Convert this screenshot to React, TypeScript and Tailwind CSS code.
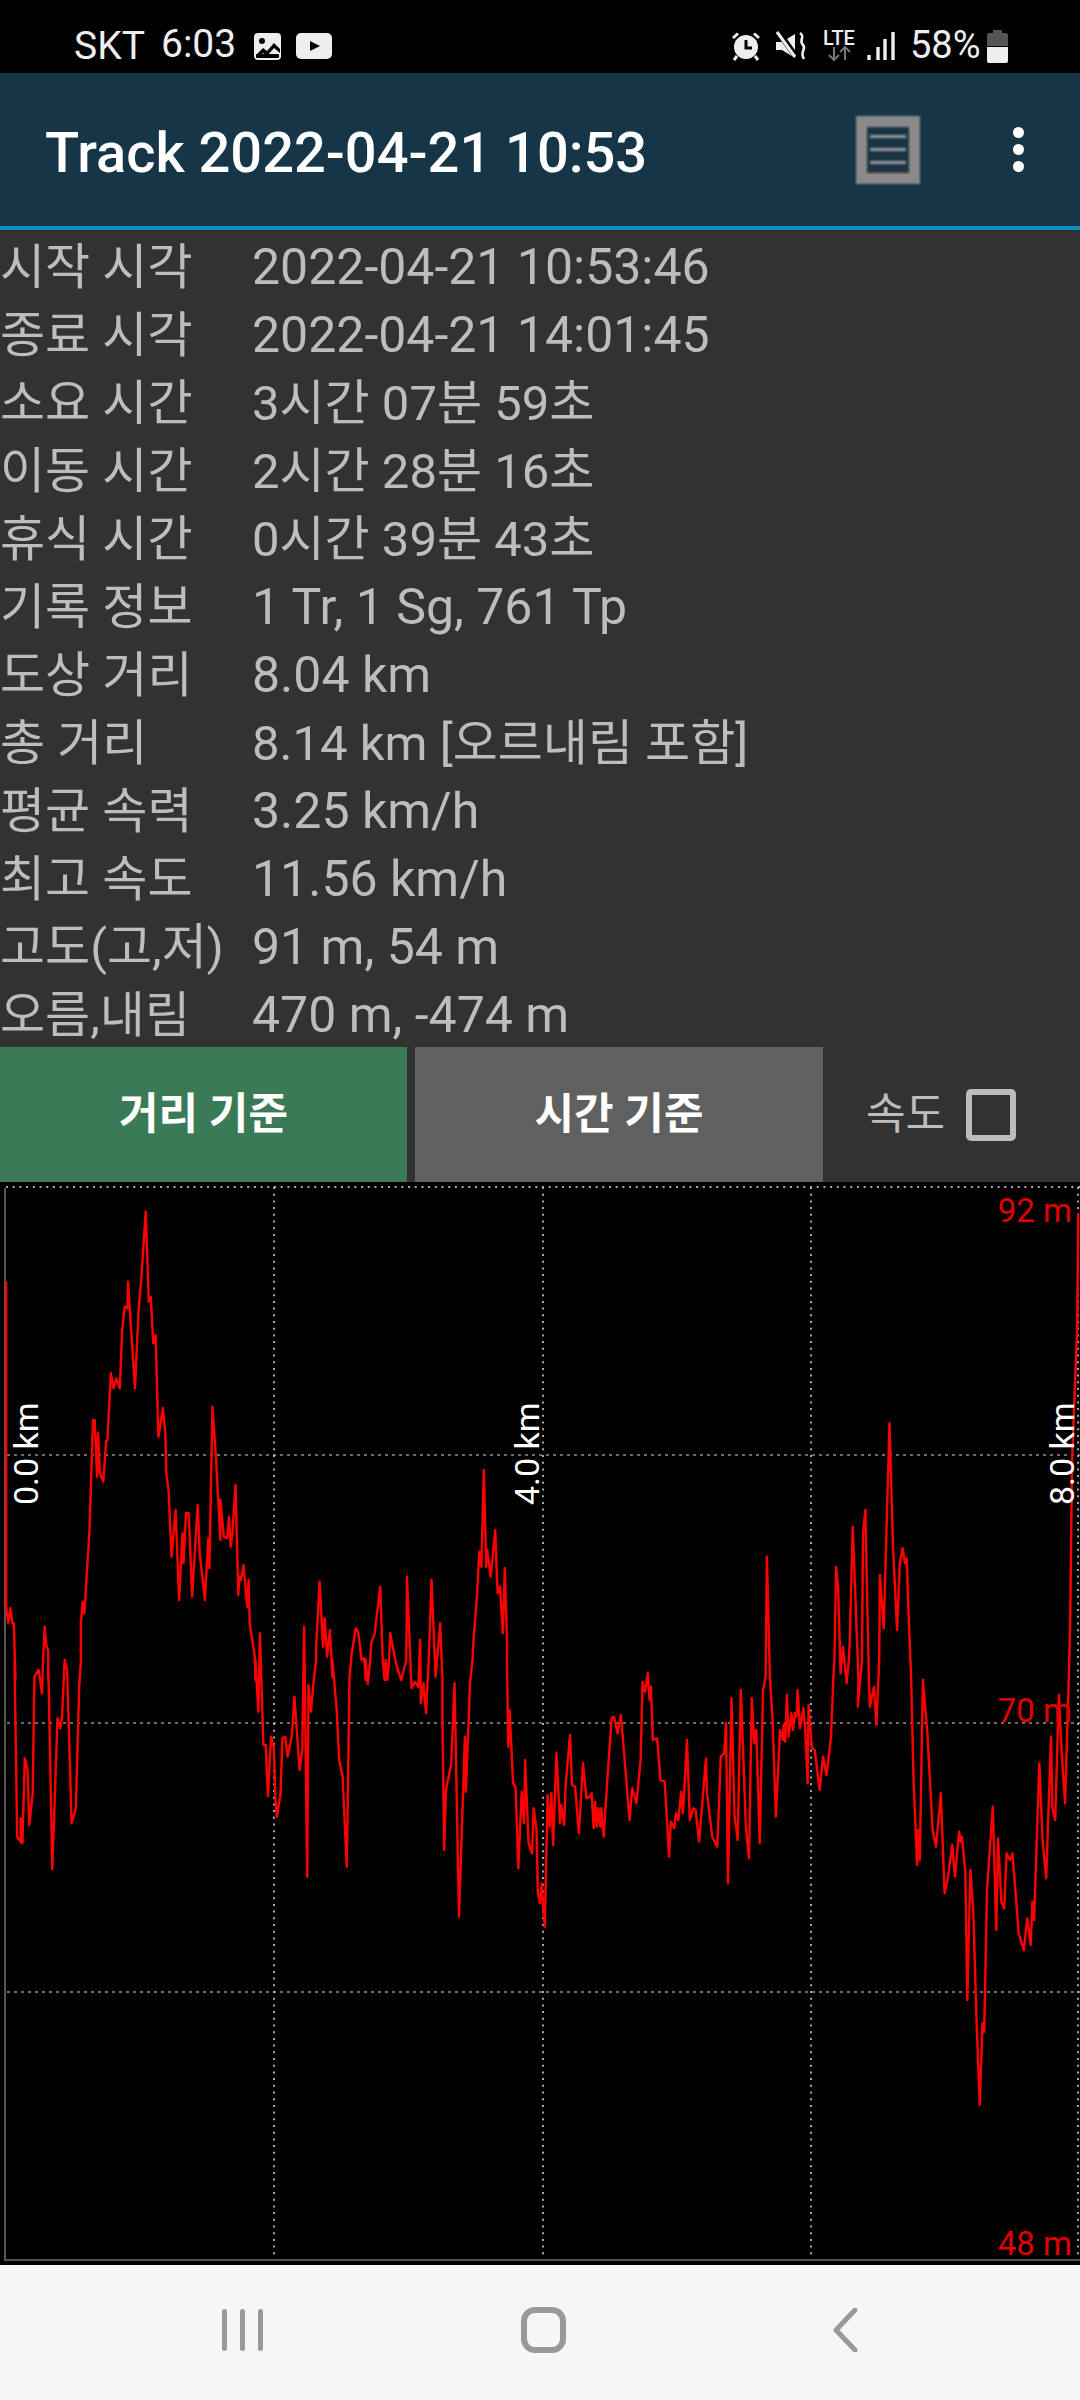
const rows = [
  { label: '시작 시각', value: '2022-04-21 10:53:46', size: 'text-[50px]' },
  { label: '종료 시각', value: '2022-04-21 14:01:45', size: 'text-[50px]' },
  { label: '소요 시간', value: '3시간 07분 59초', size: 'text-[49px]' },
  { label: '이동 시간', value: '2시간 28분 16초', size: 'text-[49px]' },
  { label: '휴식 시간', value: '0시간 39분 43초', size: 'text-[49px]' },
  { label: '기록 정보', value: '1 Tr, 1 Sg, 761 Tp', size: 'text-[50px]' },
  { label: '도상 거리', value: '8.04 km', size: 'text-[50px]' },
  { label: '총 거리', value: '8.14 km [오르내림 포함]', size: 'text-[49px]' },
  { label: '평균 속력', value: '3.25 km/h', size: 'text-[50px]' },
  { label: '최고 속도', value: '11.56 km/h', size: 'text-[50px]' },
  { label: '고도(고,저)', value: '91 m, 54 m', size: 'text-[50px]' },
  { label: '오름,내림', value: '470 m, -474 m', size: 'text-[50px]' },
];

// elevation trace, read off the four quadrants of the chart
const TL = [0, 1180];
const BL = [0, 1660];
const TR = [540, 1180];
const BR = [540, 1660];

const trace: [number[], string][] = [
  [TL, '18,305 18,1280 24,1330 30,1285 36,1330 40,1330 45,1500'],
  [BL, '42,0 50,530 60,545 60,475 65,550 72,295 80,330 85,495 95,400 100,50 112,30 122,100 125,0 130,-100'],
  [TL, '130,1350 135,1400 140,1410 140,1500'],
  [BL, '140,0 152,628 167,175 175,205 180,170 188,0 195,30 208,490 220,445 230,80 235,0'],
  [TL, '235,1330 240,1265 245,1300 250,1215 260,1050 270,720 275,720 282,890 285,760 290,880 300,905 308,785 312,780 322,580 330,625 338,595 348,625 355,450 362,380 370,385 372,305 378,410 392,625 402,400 410,300 423,95 432,365 438,350 445,490 452,465 460,770 473,685 480,760 483,880 490,935 498,1130 510,990 520,1260 530,1060 533,1150 540,1000 548,1000 558,1250 574,975 580,1120 595,1260 605,1075 608,1165 617,680 628,850 640,1080 640,960 650,1070 660,1075 665,1010 670,1100 675,1060 684,915 692,1245 695,1190 700,1200 707,1155 718,1280 722,1200 725,1330 740,1430 742,1500'],
  [BL, '742,0 750,155 755,-80 757,0 765,255 772,255 778,408 787,230 795,260 800,420 804,470 815,400 820,235 828,230 835,290 848,225 855,110 870,330 878,270 883,-100 892,650 896,75 903,155 910,70 918,0'],
  [TL, '918,1400 928,1205 938,1400 943,1315 950,1430 958,1350 965,1490'],
  [BL, '965,0 970,55 978,155 985,300 995,350 1007,620 1015,50 1020,0'],
  [TL, '1020,1430 1033,1345 1040,1355 1050,1440 1058,1435 1062,1500'],
  [BL, '1062,0 1068,72 1075,0'],
  [TL, '1078,1390 1088,1360 1104,1220 1112,1450 1118,1500'],
  [BL, '1115,50 1120,0 1125,60 1130,0'],
  [TL, '1133,1360 1150,1450 1158,1480'],
  [BL, '1150,10 1165,60 1180,0 1182,-250 1195,85 1205,65 1215,80 1220,-60 1222,130 1230,70 1237,160 1245,0'],
  [TL, '1253,1200 1265,1490 1278,1330 1285,1500'],
  [BL, '1285,200 1290,570 1295,390 1310,315 1320,70 1333,770 1350,230 1353,395 1365,70 1372,0'],
  [TL, '1375,1380 1385,1250 1392,1115 1398,1160 1405,870 1412,1160 1415,1110 1425,1190 1438,1050 1445,1240 1452,1220 1460,1360 1466,1165 1473,1400'],
  [BL, '1472,0 1476,260 1480,150 1490,370 1497,380 1505,625 1515,395 1522,490 1525,300 1535,550 1545,580 1550,445 1558,510 1562,700 1568,730'],
  [BR, '5,670 8,730 14,800 22,405 28,500 33,400 38,555 48,280 58,490 62,435 70,495 75,370 87,225 93,375 102,380 113,520 125,310 135,415 145,410 150,400 156,505 160,425 165,500 170,445 175,500 178,445 185,530 195,370 208,175 215,170 225,220 235,165 245,290 260,480 268,385 280,430 292,300 298,65 305,95 313,40 318,120 322,80 328,240 340,235 350,360 362,365 375,590 380,485 390,505 395,460 402,480 410,395 415,460 427,240 435,480 445,445 452,450 462,545 482,295 485,400 500,530 515,560 525,290 535,280 540,190 546,670 556,115 565,470 574,540 583,90 598,500 607,595 615,115 622,250 628,210 638,550 648,90 655,50'],
  [TR, '659,1130 668,1500'],
  [BR, '675,170 685,470 697,210 705,240 707,195 712,245 717,105 722,230 730,160 735,210 740,160 745,170 748,90 755,205 765,145 770,210 777,370 780,135 790,265 798,270 812,390 822,290 832,345 845,230 852,50 855,0'],
  [TR, '860,1160 866,1230 873,1480 880,1400 890,1500'],
  [BR, '890,70 897,0'],
  [TR, '900,1370 908,1040 925,1500'],
  [BR, '923,140 935,0'],
  [TR, '938,1060 945,990 955,1500'],
  [BR, '958,140 970,80 977,195 985,0'],
  [TR, '987,1185 998,1345 1015,730 1025,1100 1037,1350 1045,1150 1053,1105 1060,1150 1065,1135 1070,1300 1078,1500'],
  [BR, '1085,365 1095,615 1098,510 1103,600 1112,60 1125,220 1140,510 1150,560 1164,400 1175,700 1185,650 1197,555 1205,650 1217,515 1222,545 1225,530 1235,635 1241,1020 1250,630 1258,750 1268,1085 1277,1335 1285,1090 1290,1115 1298,690 1315,440 1325,810 1330,535 1340,725 1348,745 1355,580 1365,600 1372,580 1390,820 1405,870 1415,775 1425,855 1430,725 1435,780 1450,310 1460,550 1470,655 1484,230 1488,445 1496,480 1507,105 1515,280 1525,430 1537,0'],
  [TR, '1540,1300 1545,850 1560,440 1563,100'],
];

const tracePoints = trace
  .flatMap(([[ox, oy], pts]) =>
    pts.split(' ').map((p) => {
      const [x, y] = p.split(',').map(Number);
      return `${(ox + x / 2.904).toFixed(1)},${(oy + y / 3 - 1182).toFixed(1)}`;
    }),
  )
  .join(' ');

function StatusBar() {
  return (
    <div className="h-[73px] bg-black flex items-center pt-[19px] text-[#eeeeee] text-[39px] font-[Roboto,sans-serif]">
      <span className="ml-[74px] w-[87px] leading-none">SKT</span>
      <span className="w-[92px] leading-none mt-[-3px]">6:03</span>
      <svg width="29" height="29" viewBox="0 0 29 29">
        <rect x="1" y="1" width="27" height="27" rx="4" fill="#eee" />
        <rect x="3" y="22" width="23" height="4" rx="1" fill="#000" />
        <path d="M3 23 L10 16 L14 19 L21 11 L27 17 V21 L21 16 L14 24 L10 21 L6 25Z" fill="#000" />
        <circle cx="9" cy="9" r="3" fill="#000" />
      </svg>
      <svg width="36" height="26" viewBox="0 0 36 26" className="ml-[14px]">
        <rect width="36" height="26" rx="5" fill="#eee" />
        <path d="M14 8 L24 13 L14 18Z" fill="#000" />
      </svg>
      <div className="ml-auto mr-[72px] flex items-center">
        <svg width="30" height="30" viewBox="0 0 30 30">
          <circle cx="15" cy="16" r="12" fill="#eee" />
          <path d="M15 9 V17 H21" stroke="#000" strokeWidth="3" fill="none" />
          <path d="M2 7 L7 2.5 M28 7 L23 2.5 M6 25 L3 29 M24 25 L27 29" stroke="#eee" strokeWidth="3" />
        </svg>
        <svg width="31" height="30" viewBox="0 0 31 30" className="ml-[15px]">
          <path d="M0 11 H6 L19 3 V27 L6 19 H0Z" fill="#eee" />
          <path d="M3 2 L21 27" stroke="#000" strokeWidth="6" />
          <path d="M1 1 L19 26" stroke="#eee" strokeWidth="3" />
          <path d="M24 2 C30 6 22 9 27 14 C31 18 23 21 28 28" stroke="#eee" strokeWidth="2.6" fill="none" />
        </svg>
        <div className="ml-[15px] w-[34px] h-[32px] flex flex-col items-center">
          <span className="text-[20px] leading-[16px] font-medium">LTE</span>
          <svg width="24" height="15" viewBox="0 0 24 15">
            <path d="M7 1 V14 M2 9 L7 14 L12 9" stroke="#777" strokeWidth="2" fill="none" />
            <path d="M18 14 V1 M13 6 L18 1 L23 6" stroke="#777" strokeWidth="2" fill="none" />
          </svg>
        </div>
        <svg width="28" height="30" viewBox="0 0 28 30" className="ml-[11px]">
          <path d="M2 24 V29 M11 16 V29 M18 8 V29 M26 1 V29" stroke="#eee" strokeWidth="3.4" />
        </svg>
        <span className="ml-[15px] w-[77px] text-[38px] leading-none whitespace-nowrap mt-[-3px]">58%</span>
        <svg width="21" height="33" viewBox="0 0 21 33">
          <path d="M6 0 H15 V3 H19 Q21 3 21 5 V16 H0 V5 Q0 3 2 3 H6Z" fill="#555" />
          <path d="M0 17 H21 V31 Q21 33 19 33 H2 Q0 33 0 31Z" fill="#eee" />
        </svg>
      </div>
    </div>
  );
}

function AppBar() {
  return (
    <div className="h-[157px] bg-[#163547] border-b-4 border-[#0f8fbf] flex items-center font-[Roboto,sans-serif]">
      <h1 className="ml-[45px] mt-[7px] text-[56px] font-medium leading-none text-white whitespace-nowrap">
        Track 2022-04-21 10:53
      </h1>
      <div className="ml-auto w-[64px] h-[68px] bg-[#8a8a8a] blur-[1.2px] mr-[93px] px-[11px] pt-[11px]">
        <div className="h-[46px] bg-[#1a3445] border-b-2 border-[#333] flex flex-col gap-[10px] px-[3px] pt-[8px]">
          <div className="h-[3px] bg-[#999]" />
          <div className="h-[3px] bg-[#999]" />
          <div className="h-[3px] bg-[#999]" />
        </div>
      </div>
      <div className="mr-[56px] flex flex-col gap-[6px]">
        <div className="w-[11px] h-[11px] rounded-full bg-white" />
        <div className="w-[11px] h-[11px] rounded-full bg-white" />
        <div className="w-[11px] h-[11px] rounded-full bg-white" />
      </div>
    </div>
  );
}

function Chart() {
  const vx = [274, 543, 811, 1078];
  const hy = [273, 541, 810];
  const labelFont = 'Roboto, sans-serif';
  return (
    <svg width="1080" height="1083" viewBox="0 0 1080 1083" className="block bg-black">
      <g stroke="#a8a8a8" strokeWidth="2" strokeDasharray="2 4.7">
        <line x1="6" y1="5" x2="1080" y2="5" />
        {vx.map((x) => (
          <line key={x} x1={x} y1="5" x2={x} y2="1077" />
        ))}
      </g>
      <g stroke="#d8d8d8" strokeWidth="1" strokeDasharray="3 4">
        {hy.map((y) => (
          <line key={y} x1="7" y1={y} x2="1080" y2={y} />
        ))}
      </g>
      <path d="M5 6 V1078 H1080" stroke="#555" strokeWidth="2" fill="none" />
      <polyline points={tracePoints} fill="none" stroke="#ff0000" strokeWidth="2.4" strokeLinejoin="round" />
      <g fill="#e00000" fontFamily={labelFont} fontSize="33" textAnchor="end">
        <text x="1072" y="40">92 m</text>
        <text x="1072" y="540">70 m</text>
        <text x="1072" y="1073">48 m</text>
      </g>
      <g fill="#ffffff" fontFamily={labelFont} fontSize="34">
        <text transform="translate(38 323) rotate(-90)">0.0 km</text>
        <text transform="translate(539 323) rotate(-90)">4.0 km</text>
        <text transform="translate(1074 323) rotate(-90)">8.0 km</text>
      </g>
    </svg>
  );
}

function NavBar() {
  return (
    <div className="h-[135px] bg-[#f6f6f6] flex items-end">
      <div className="flex gap-[13px] ml-[222px] mb-[49px]">
        <div className="w-[5px] h-[42px] rounded-full bg-[#999]" />
        <div className="w-[5px] h-[42px] rounded-full bg-[#999]" />
        <div className="w-[5px] h-[42px] rounded-full bg-[#999]" />
      </div>
      <div className="ml-[258px] mb-[47px] w-[45px] h-[46px] rounded-[14px] border-[6px] border-[#999]" />
      <svg width="26" height="44" viewBox="0 0 26 44" className="ml-[266px] mb-[48px]">
        <path d="M23 2 L4 22 L23 42" stroke="#999" strokeWidth="5" strokeLinecap="round" strokeLinejoin="round" fill="none" />
      </svg>
    </div>
  );
}

export default function App() {
  return (
    <div className="w-[1080px] h-[2400px] overflow-hidden bg-[#323232]">
      <StatusBar />
      <AppBar />
      <div className="h-[817px] pt-[3px] text-[#bdbdbd] font-[Roboto,'Noto_Sans_CJK_KR',sans-serif]">
        {rows.map((row) => (
          <div key={row.label} className="flex h-[68px] items-center leading-none whitespace-nowrap">
            <span className="w-[252px] text-[49px]">{row.label}</span>
            <span className={row.size}>{row.value}</span>
          </div>
        ))}
      </div>
      <div className="h-[135px] flex font-[Roboto,'Noto_Sans_CJK_KR',sans-serif]">
        <button className="w-[407px] bg-[#3b7a57] text-white text-[43px] font-bold">거리 기준</button>
        <button className="ml-[8px] w-[408px] bg-[#606060] text-white text-[43px] font-bold">시간 기준</button>
        <span className="ml-[43px] self-center text-[43px] text-[#bdbdbd] leading-none">속도</span>
        <div className="ml-[21px] self-center w-[50px] h-[52px] rounded-[5px] border-[6px] border-[#bdbdbd]" />
      </div>
      <Chart />
      <NavBar />
    </div>
  );
}
